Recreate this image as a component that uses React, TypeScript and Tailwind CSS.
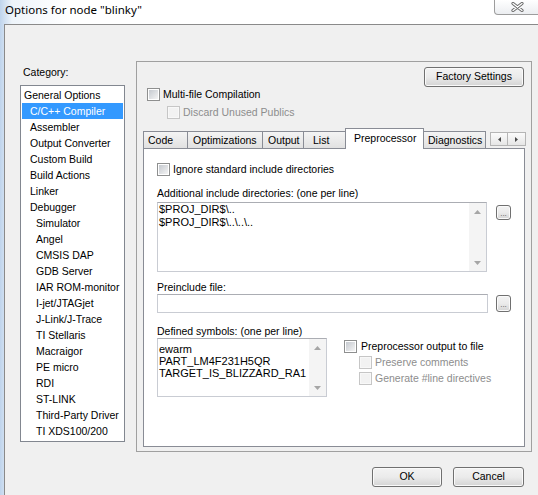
import clsx from 'clsx'
import type { ReactNode } from 'react'

const categories: [string, number][] = [
  ['General Options', 0],
  ['C/C++ Compiler', 1],
  ['Assembler', 1],
  ['Output Converter', 1],
  ['Custom Build', 1],
  ['Build Actions', 1],
  ['Linker', 1],
  ['Debugger', 1],
  ['Simulator', 2],
  ['Angel', 2],
  ['CMSIS DAP', 2],
  ['GDB Server', 2],
  ['IAR ROM-monitor', 2],
  ['I-jet/JTAGjet', 2],
  ['J-Link/J-Trace', 2],
  ['TI Stellaris', 2],
  ['Macraigor', 2],
  ['PE micro', 2],
  ['RDI', 2],
  ['ST-LINK', 2],
  ['Third-Party Driver', 2],
  ['TI XDS100/200', 2],
]

const tabs = [
  { label: 'Code', box: 'w-[45px] pl-[4px]' },
  { label: 'Optimizations', box: 'w-[76px] pl-[5px]' },
  { label: 'Output', box: 'w-[42px] pl-[5px]' },
  { label: 'List', box: 'w-[43px] pl-[9px]' },
  { label: 'Preprocessor', box: 'w-[79px] pl-[8px]', active: true },
  { label: 'Diagnostics', box: 'w-[63px] pl-[4px]' },
]

function Check({ disabled = false }: { disabled?: boolean }) {
  return (
    <span
      className={clsx(
        'flex h-[13px] w-[13px] shrink-0 items-center justify-center border',
        disabled ? 'border-[#c6c6c6] bg-[#f8f8f8]' : 'border-[#8e8f8f] bg-white',
      )}
    >
      <span className={clsx('h-[9px] w-[9px]', disabled ? 'bg-[#f2f2f2]' : 'bg-gradient-to-br from-[#c5c9cf] to-[#f4f4f4]')} />
    </span>
  )
}

function WinButton({ className, children }: { className?: string; children: ReactNode }) {
  return (
    <div
      className={clsx(
        'flex shrink-0 items-center justify-center rounded-[3px] border border-[#707070] bg-gradient-to-b from-[#f3f3f3] via-[#ebebeb] to-[#d4d4d4] text-[10.5px] shadow-[inset_0_0_0_1px_#fafafa]',
        className,
      )}
    >
      {children}
    </div>
  )
}

function VScroll() {
  return (
    <div className="flex w-[17px] shrink-0 flex-col justify-between bg-[#f4f4f4]">
      <div className="flex h-[17px] items-center justify-center">
        <svg width="7" height="4" viewBox="0 0 7 4">
          <path d="M0 4 L3.5 0 L7 4Z" fill="#a6a6a6" />
        </svg>
      </div>
      <div className="flex h-[17px] items-center justify-center">
        <svg width="7" height="4" viewBox="0 0 7 4">
          <path d="M0 0 L3.5 4 L7 0Z" fill="#a6a6a6" />
        </svg>
      </div>
    </div>
  )
}

export default function App() {
  return (
    <div className="relative h-[495px] w-[538px] overflow-hidden bg-[linear-gradient(90deg,#bfd4ec_0px,#eef4fa_12px,#ffffff_70px)] font-['Liberation_Sans',Arial,sans-serif] text-black">
      <div className="h-[24px] pl-[5px] pt-[2px] font-['Noto_Sans',sans-serif] text-[11.5px] leading-[16px]">Options for node "blinky"</div>

      <div className="absolute left-[494px] top-0 flex h-[15px] w-[47px] items-center justify-center rounded-b-[4px] border border-t-0 border-[#9d9d9d] bg-gradient-to-b from-white to-[#eceef1]">
        <svg width="13" height="10" viewBox="0 0 13 10" className="mr-[1px]">
          <path d="M2 1.5 L11 8.5 M11 1.5 L2 8.5" stroke="#6a6a6a" strokeWidth="3.2" strokeLinecap="round" />
          <path d="M2 1.5 L11 8.5 M11 1.5 L2 8.5" stroke="#ffffff" strokeWidth="1.3" strokeLinecap="round" />
        </svg>
      </div>

      <div className="ml-[4px] flex h-[471px] flex-col border-l border-t border-[#8a8a8a] bg-[#f0f0f0]">
        <div className="flex">
          <div className="ml-[15px] mt-[40px] w-[105px]">
            <div className="pl-[3px] text-[10.5px] leading-[14px]">Category:</div>
            <div className="mt-[6px] h-[357px] border border-[#828790] bg-white p-px">
              {categories.map(([name, level], i) => (
                <div
                  key={name}
                  className={clsx(
                    'h-[16px] text-[10.5px] leading-[16px]',
                    level === 0 && 'pl-[2px]',
                    level === 1 && 'pl-[8px]',
                    level === 2 && 'pl-[14px]',
                    i === 1 && 'bg-[#3399ff] text-white',
                  )}
                >
                  {name}
                </div>
              ))}
            </div>
          </div>

          <div className="ml-[11px] mt-[36px] flex h-[391px] w-[396px] flex-col border border-[#a0a0a0]">
            <WinButton className="mr-[7px] mt-[5px] h-[20px] w-[100px] self-end">Factory Settings</WinButton>

            <div className="ml-[10px] mt-[1px] flex h-[13px] items-center gap-[3px] text-[10.5px]">
              <Check />
              <span>Multi-file Compilation</span>
            </div>
            <div className="ml-[30px] mt-[5px] flex h-[13px] items-center gap-[3px] text-[10.5px] text-[#8d8d8d]">
              <Check disabled />
              <span>Discard Unused Publics</span>
            </div>

            <div className="relative z-10 ml-[6px] mt-[9px] flex h-[20px] items-end">
              {tabs.map((tab, i) => (
                <div
                  key={tab.label}
                  className={clsx(
                    'shrink-0 border border-b-0 border-[#898c95] text-[10.5px]',
                    i > 0 && '-ml-px',
                    tab.box,
                    tab.active
                      ? 'relative z-10 -mb-px h-[21px] bg-white pt-[2px] leading-[14px]'
                      : 'h-[17px] bg-gradient-to-b from-[#f4f4f4] to-[#e1e1e1] leading-[16px]',
                  )}
                >
                  {tab.label}
                </div>
              ))}
              <div className="mb-[2px] ml-[4px] flex self-start pt-[4px]">
                <div className="flex h-[14px] w-[18px] items-center justify-center border border-[#b5b5b5] bg-gradient-to-b from-[#fbfbfb] to-[#e6e6e6]">
                  <svg width="3" height="5" viewBox="0 0 3 5">
                    <path d="M3 0 L0 2.5 L3 5Z" fill="#4a4a4a" />
                  </svg>
                </div>
                <div className="-ml-px flex h-[14px] w-[19px] items-center justify-center border border-[#b5b5b5] bg-gradient-to-b from-[#fbfbfb] to-[#e6e6e6]">
                  <svg width="3" height="5" viewBox="0 0 3 5">
                    <path d="M0 0 L3 2.5 L0 5Z" fill="#4a4a4a" />
                  </svg>
                </div>
              </div>
            </div>

            <div className="ml-[6px] h-[299px] w-[382px] border border-[#898c95] bg-white text-[10.5px]">
              <div className="ml-[13px] mt-[14px] flex h-[13px] items-center gap-[3px]">
                <Check />
                <span>Ignore standard include directories</span>
              </div>

              <div className="ml-[13px] mt-[11px] leading-[13px]">Additional include directories: (one per line)</div>
              <div className="ml-[13px] mt-[2px] flex">
                <div className="flex h-[70px] w-[330px] border border-[#c9ccd3] border-t-[#abadb3] bg-white">
                  <div className="flex-1 pl-[1px] text-[11px] leading-[13px]">
                    <div>{'$PROJ_DIR$\\..'}</div>
                    <div>{'$PROJ_DIR$\\..\\..\\..'}</div>
                  </div>
                  <VScroll />
                </div>
                <WinButton className="ml-[9px] mt-[3px] h-[15px] w-[15px]">
                  <span className="mt-[2px] text-[8px] leading-[8px] text-[#555]">...</span>
                </WinButton>
              </div>

              <div className="ml-[13px] mt-[9px] leading-[13px]">Preinclude file:</div>
              <div className="ml-[13px] flex">
                <div className="h-[19px] w-[331px] border border-[#c9ccd3] border-t-[#abadb3] bg-white" />
                <WinButton className="ml-[8px] mt-[1px] h-[17px] w-[15px]">
                  <span className="mt-[3px] text-[8px] leading-[8px] text-[#555]">...</span>
                </WinButton>
              </div>

              <div className="ml-[13px] mt-[12px] leading-[13px]">Defined symbols: (one per line)</div>
              <div className="ml-[13px] flex">
                <div className="flex h-[59px] w-[170px] border border-[#c9ccd3] border-t-[#abadb3] bg-white">
                  <div className="flex-1 pl-[1px] pt-[4px] text-[11px] leading-[12px]">
                    <div>ewarm</div>
                    <div>PART_LM4F231H5QR</div>
                    <div>TARGET_IS_BLIZZARD_RA1</div>
                  </div>
                  <VScroll />
                </div>
                <div className="ml-[17px] mt-[2px] flex flex-col">
                  <div className="flex h-[13px] items-center gap-[4px]">
                    <Check />
                    <span>Preprocessor output to file</span>
                  </div>
                  <div className="ml-[15px] mt-[3px] flex h-[13px] items-center gap-[3px] text-[#8d8d8d]">
                    <Check disabled />
                    <span>Preserve comments</span>
                  </div>
                  <div className="ml-[15px] mt-[3px] flex h-[13px] items-center gap-[3px] text-[#8d8d8d]">
                    <Check disabled />
                    <span>Generate #line directives</span>
                  </div>
                </div>
              </div>
            </div>
          </div>
        </div>

        <div className="mr-[14px] mt-[15px] flex justify-end gap-[11px]">
          <WinButton className="h-[20px] w-[70px]">OK</WinButton>
          <WinButton className="h-[20px] w-[71px]">Cancel</WinButton>
        </div>
      </div>
    </div>
  )
}
